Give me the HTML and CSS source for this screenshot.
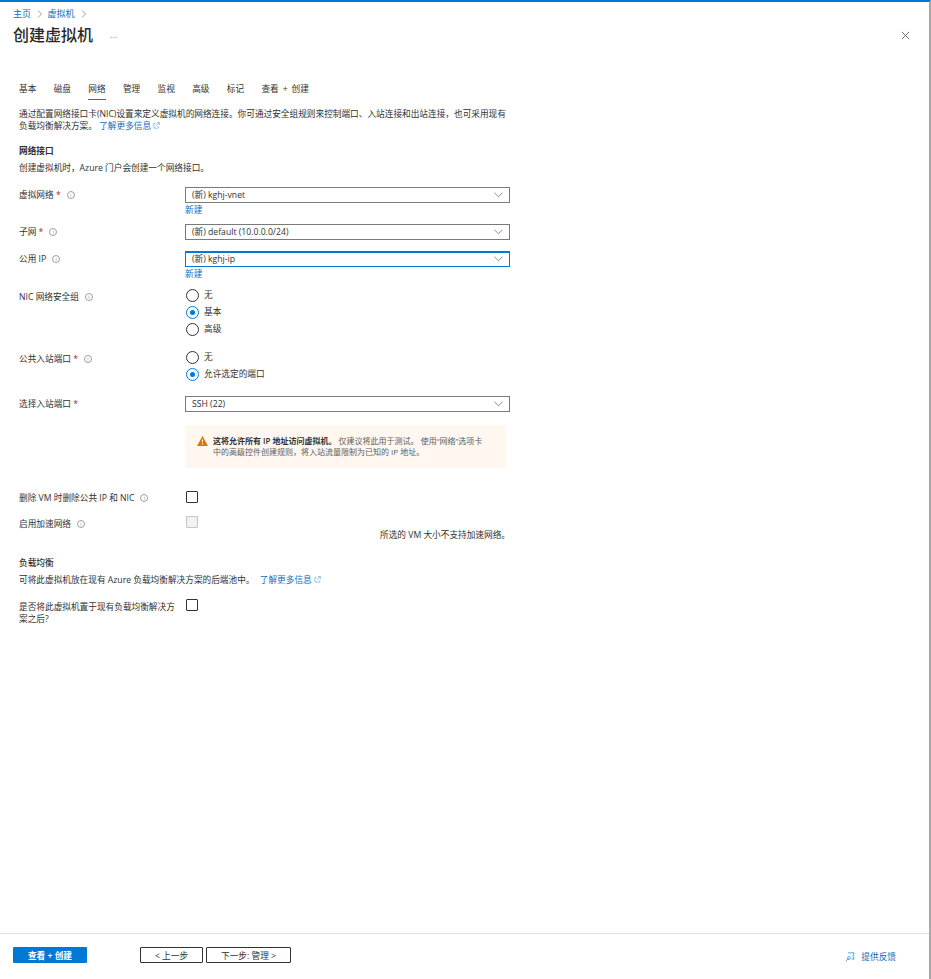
FILE: index.html
```html
<!DOCTYPE html>
<html lang="zh-CN">
<head>
<meta charset="utf-8">
<title>创建虚拟机</title>
<link rel="stylesheet" href="styles.css">
</head>
<body>
<div class="blade">
  <div class="top">
    <nav class="crumbs"><a>主页</a><svg class="chev" viewBox="0 0 8 8"><path d="M2 .5 5.5 4 2 7.5"/></svg><a>虚拟机</a><svg class="chev" viewBox="0 0 8 8"><path d="M2 .5 5.5 4 2 7.5"/></svg></nav>
    <div class="titlerow">
      <h1>创建虚拟机</h1>
      <span class="more">...</span>
      <svg class="close" viewBox="0 0 10 10"><path d="M1 1 9 9M9 1 1 9"/></svg>
    </div>
  </div>
  <main class="content">
    <div class="tabs">
      <span class="tab">基本</span><span class="tab">磁盘</span><span class="tab active">网络</span><span class="tab">管理</span><span class="tab">监视</span><span class="tab">高级</span><span class="tab">标记</span><span class="tab">查看 + 创建</span>
    </div>
    <p class="intro">通过配置网络接口卡(NIC)设置来定义虚拟机的网络连接。你可通过安全组规则来控制端口、入站连接和出站连接，也可采用现有负载均衡解决方案。 <a class="link">了解更多信息<svg class="ext" viewBox="0 0 8 8"><path d="M3 1.5H1v5.500h5.500V5M4.500.7h2.800V3.500M7.300.7 3.500 4.500"/></svg></a></p>
    <h2 class="h-net">网络接口</h2>
    <p class="sub">创建虚拟机时，Azure 门户会创建一个网络接口。</p>

    <div class="row r-vnet">
      <div class="lab">虚拟网络 <i class="req">*</i><span class="info">i</span></div>
      <div class="ctl"><div class="select"><span>(新) kghj-vnet</span><svg class="caret" viewBox="0 0 10 6"><path d="M.5.5 5 5 9.500.5"/></svg></div><a class="new">新建</a></div>
    </div>
    <div class="row r-subnet">
      <div class="lab">子网 <i class="req">*</i><span class="info">i</span></div>
      <div class="ctl"><div class="select"><span>(新) default (10.0.0.0/24)</span><svg class="caret" viewBox="0 0 10 6"><path d="M.5.5 5 5 9.500.5"/></svg></div></div>
    </div>
    <div class="row r-ip">
      <div class="lab">公用 IP<span class="info">i</span></div>
      <div class="ctl"><div class="select focus"><span>(新) kghj-ip</span><svg class="caret" viewBox="0 0 10 6"><path d="M.5.5 5 5 9.500.5"/></svg></div><a class="new">新建</a></div>
    </div>
    <div class="row r-nsg">
      <div class="lab">NIC 网络安全组<span class="info">i</span></div>
      <div class="ctl radios">
        <div class="radio"><b class="dot"></b>无</div>
        <div class="radio on"><b class="dot"></b>基本</div>
        <div class="radio"><b class="dot"></b>高级</div>
      </div>
    </div>
    <div class="row r-inbound">
      <div class="lab">公共入站端口 <i class="req">*</i><span class="info">i</span></div>
      <div class="ctl radios">
        <div class="radio"><b class="dot"></b>无</div>
        <div class="radio on"><b class="dot"></b>允许选定的端口</div>
      </div>
    </div>
    <div class="row r-ports">
      <div class="lab">选择入站端口 <i class="req">*</i></div>
      <div class="ctl"><div class="select"><span>SSH (22)</span><svg class="caret" viewBox="0 0 10 6"><path d="M.5.5 5 5 9.500.5"/></svg></div></div>
    </div>
    <div class="warn">
      <svg class="tri" viewBox="0 0 12 11"><path fill="#db7500" d="M6 0 12 11H0z"/><path stroke="#fff" stroke-width="1.200" d="M6 3.800V7M6 8v1.400"/></svg>
      <p><strong>这将允许所有 IP 地址访问虚拟机。</strong> 仅建议将此用于测试。 使用“网络”选项卡中的高级控件创建规则，将入站流量限制为已知的 IP 地址。</p>
    </div>
    <div class="row r-del">
      <div class="lab">删除 VM 时删除公共 IP 和 NIC<span class="info">i</span></div>
      <div class="ctl"><b class="check"></b></div>
    </div>
    <div class="row r-accel">
      <div class="lab">启用加速网络<span class="info">i</span></div>
      <div class="ctl"><b class="check off"></b></div>
    </div>
    <p class="note">所选的 VM 大小不支持加速网络。</p>
    <h2 class="h-lb">负载均衡</h2>
    <p class="sub">可将此虚拟机放在现有 Azure 负载均衡解决方案的后端池中。 <a class="link learn">了解更多信息<svg class="ext" viewBox="0 0 8 8"><path d="M3 1.500H1v5.500h5.500V5M4.500.7h2.800V3.500M7.300.7 3.500 4.500"/></svg></a></p>
    <div class="row r-lb">
      <div class="lab wide">是否将此虚拟机置于现有负载均衡解决方案之后?</div>
      <div class="ctl"><b class="check"></b></div>
    </div>
  </main>
  <footer class="foot">
    <button class="primary">查看 + 创建</button>
    <button class="sec prev">&lt; 上一步</button>
    <button class="sec next">下一步: 管理 &gt;</button>
    <a class="feedback"><svg class="fb" viewBox="0 0 12 12"><path d="M3.500 1h7.500L9.500 5.500l1.500 3H8M4.800 5.500a1.700 1.700 0 1 0 .01 0M1.500 11.500c.3-2.500 1.500-3.500 3.300-3.500"/></svg>提供反馈</a>
  </footer>
</div>
</body>
</html>
```
FILE: styles.css
```css
* { box-sizing: border-box; }
html, body { margin: 0; height: 100%; overflow: hidden; }
body {
  background: #fff;
  color: #323130;
  font-family: "Open Sans", "Noto Sans CJK SC", "Liberation Sans", sans-serif;
  font-size: 8.67px;
  line-height: 12px;
}
p, h1, h2 { margin: 0; }
a { color: #0f6cbd; }
i { font-style: normal; }

.blade {
  height: 979px;
  display: flex;
  flex-direction: column;
  border-top: 2px solid #0078d4;
  border-right: 2px solid #a8a8a8;
}
.top { padding: 6px 14px 0 13px; }
.crumbs { display: flex; align-items: center; height: 12px; color: #0078d4; font-size: 9px; }
.chev { width: 8px; height: 8px; margin: 0 3.500px 0 5px; fill: none; stroke: #8a8886; stroke-width: .8; }
.titlerow { display: flex; align-items: center; margin-top: 3px; height: 24px; }
h1 { font-size: 16px; font-weight: 500; line-height: 24px; color: #292827; }
.more { margin-left: 17px; font-size: 9px; color: #8a8886; line-height: 8px; }
.close { width: 9px; height: 9px; margin: 0 5px 0 auto; fill: none; stroke: #605e5c; stroke-width: 1; }

.content { flex: 1; padding: 0 0 0 19px; min-height: 0; }
.tabs { display: flex; gap: 17.300px; margin-top: 36px; height: 17px; }
.tab { height: 17px; line-height: 13px; position: relative; color: #323130; white-space: nowrap; word-spacing: 1.700px; }
.tab.active::after { content: ""; position: absolute; left: 0; right: 0; bottom: 0; height: 1px; background: #0078d4; }

.intro { width: 490px; margin-top: 9px; line-height: 11.500px; }
.link { color: #0f6cbd; }
.ext { width: 7px; height: 7px; margin-left: 2px; fill: none; stroke: #5b9bd5; stroke-width: .7; }
h2 { font-size: 8.67px; font-weight: 600; line-height: 12px; color: #323130; }
.h-net { margin-top: 13px; }
.sub { margin-top: 5px; line-height: 13px; }

.row { display: grid; grid-template-columns: 166px 325px; }
.lab { line-height: 12px; display: flex; align-items: center; height: 14px; white-space: pre; }
.req { color: #a4262c; }
.info {
  display: inline-block; width: 8px; height: 8px; margin-left: 6px; border: 1px solid #a19f9d; border-radius: 50%;
  font-size: 5px; line-height: 6px; text-align: center; color: #8a8886; font-style: normal;
}
.select {
  height: 16px; border: 1px solid #7a7a7a; display: flex; align-items: center; justify-content: space-between;
  padding: 0 6px; color: #323130;
}
.select.focus { border-color: #0078d4; box-shadow: inset 0 1px 0 #0078d4; }
.caret { width: 9px; height: 6px; fill: none; stroke: #605e5c; stroke-width: .8; }
.new { display: block; height: 11px; line-height: 11px; color: #0f6cbd; margin-top: 2px; }

.r-vnet { margin-top: 12px; }
.r-subnet { margin-top: 8px; }
.r-ip { margin-top: 11px; }
.r-nsg { margin-top: 8px; }
.r-inbound { margin-top: 14px; }
.r-ports { margin-top: 15px; }
.r-vnet .lab, .r-subnet .lab, .r-ip .lab, .r-ports .lab { height: 16px; }
.r-nsg .lab, .r-inbound .lab { height: 17px; }

.radios { display: flex; flex-direction: column; gap: 3px; padding-left: 1px; }
.radio { display: flex; align-items: center; height: 14px; }
.dot { width: 13px; height: 13px; border: 1px solid #323130; border-radius: 50%; margin-right: 5px; flex: none; display: flex; align-items: center; justify-content: center; }
.radio.on .dot { border-color: #0078d4; }
.radio.on .dot::after { content: ""; width: 5px; height: 5px; border-radius: 50%; background: #0078d4; }

.warn {
  width: 321px; height: 43px; margin: 13px 0 0 166px; background: #fff7f0; font-size: 8px;
  display: flex; align-items: flex-start; padding: 10px 17px 0 12px; color: #605e5c;
}
.tri { width: 11px; height: 10px; flex: none; margin: 1px 5px 0 0; }
.warn p { line-height: 11px; }
.warn strong { font-weight: 600; color: #323130; }

.check { display: block; width: 12px; height: 12px; border: 1px solid #323130; margin-left: 1px; border-radius: 1px; }
.check.off { background: #f3f2f1; border-color: #c8c6c4; }
.r-del { margin-top: 23px; }
.r-accel { margin-top: 11px; }
.r-accel .lab { height: 16px; }
.note { width: 491px; text-align: right; line-height: 10px; margin-top: -2px; }
.h-lb { margin-top: 17px; font-weight: 500; }
.h-lb + .sub { margin-top: 5px; }
.learn { margin-left: 3px; }
.r-lb { margin-top: 12px; }
.lab.wide { white-space: normal; width: 160px; height: auto; display: block; margin-top: 2px; }

.foot {
  height: 45px; border-top: 1px solid #e1e1e1; display: flex; align-items: flex-start;
  padding: 13px 0 0 13px; margin-bottom: 1px;
}
button { font: inherit; height: 16px; padding: 1px 0 0; border-radius: 1px; }
.primary { width: 74px; background: #0078d4; color: #fff; border: 0; font-weight: 600; }
.sec { background: #fff; border: 1px solid #323130; color: #323130; }
.prev { width: 63px; margin-left: 53px; }
.next { width: 85px; margin-left: 3px; }
.feedback { margin-left: auto; margin-right: 33px; display: flex; align-items: center; height: 16px; color: #0f6cbd; margin-top: 2px; }
.fb { width: 10px; height: 10px; margin-right: 6px; fill: none; stroke: #0078d4; stroke-width: .8; }
```
